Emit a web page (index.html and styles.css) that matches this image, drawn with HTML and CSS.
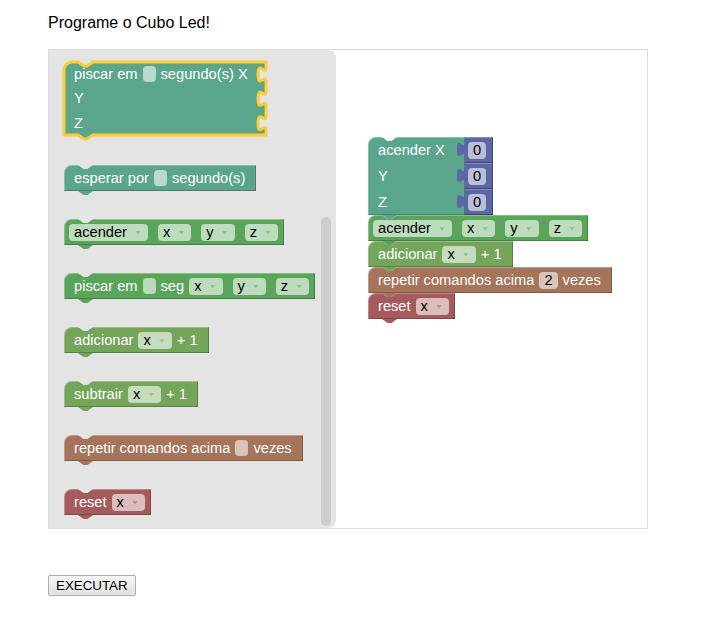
FILE: index.html
```html
<!DOCTYPE html>
<html lang="pt">
<head>
<meta charset="utf-8">
<title>Programe o Cubo Led!</title>
<link rel="stylesheet" href="styles.css">
</head>
<body>
<div class="page">
  <p class="title">Programe o Cubo Led!</p>
  <div class="workspace">
    <div class="flyout">
      <div class="blk sel teal">
        <svg class="sel-shape" width="202" height="73" viewBox="0 0 202 73"><path d="M0,8 A8,8 0 0 1 8,0 H14 l6,4 h3 l6,-4 H202 V5 c0,10 -8,-8 -8,7.5 s8,-2.5 8,7.5 V29.3 c0,10 -8,-8 -8,7.5 s8,-2.5 8,7.5 V53.7 c0,10 -8,-8 -8,7.5 s8,-2.5 8,7.5 V73 H29 l-6,4 h-3 l-6,-4 H0 Z"/></svg>
        <div class="row"><span class="lbl">piscar em</span><span class="num"></span><span class="lbl">segundo(s) X</span></div>
        <div class="row"><span class="lbl">Y</span></div>
        <div class="row"><span class="lbl">Z</span></div>
      </div>
      <div class="blk teal"><span class="lbl">esperar por</span><span class="num"></span><span class="lbl">segundo(s)</span></div>
      <div class="blk green dstart dend"><span class="dd">acender</span><span class="dd sp">x</span><span class="dd sp">y</span><span class="dd sp">z</span></div>
      <div class="blk green dend"><span class="lbl">piscar em</span><span class="num"></span><span class="lbl">seg</span><span class="dd">x</span><span class="dd sp">y</span><span class="dd sp">z</span></div>
      <div class="blk lime"><span class="lbl">adicionar</span><span class="dd">x</span><span class="lbl">+ 1</span></div>
      <div class="blk lime"><span class="lbl">subtrair</span><span class="dd">x</span><span class="lbl">+ 1</span></div>
      <div class="blk brown"><span class="lbl">repetir comandos acima</span><span class="num"></span><span class="lbl">vezes</span></div>
      <div class="blk red dend"><span class="lbl">reset</span><span class="dd">x</span></div>
      <div class="scroll"></div>
    </div>
    <div class="canvas">
      <div class="stack">
        <div class="multi">
          <div class="blk teal mbody">
            <div class="row"><span class="lbl">acender X</span></div>
            <div class="row"><span class="lbl">Y</span></div>
            <div class="row"><span class="lbl">Z</span></div>
          </div>
          <div class="values">
            <div class="val"><svg class="tab" width="8" height="26" viewBox="0 0 8 26"><path d="M8,5 c0,10 -8,-8 -8,7.5 s8,-2.5 8,7.5 Z"/></svg><span class="num val-n">0</span></div>
            <div class="val"><svg class="tab" width="8" height="26" viewBox="0 0 8 26"><path d="M8,5 c0,10 -8,-8 -8,7.5 s8,-2.5 8,7.5 Z"/></svg><span class="num val-n">0</span></div>
            <div class="val"><svg class="tab" width="8" height="26" viewBox="0 0 8 26"><path d="M8,5 c0,10 -8,-8 -8,7.5 s8,-2.5 8,7.5 Z"/></svg><span class="num val-n">0</span></div>
          </div>
        </div>
        <div class="blk green dstart dend"><span class="dd">acender</span><span class="dd sp">x</span><span class="dd sp">y</span><span class="dd sp">z</span></div>
        <div class="blk lime"><span class="lbl">adicionar</span><span class="dd">x</span><span class="lbl">+ 1</span></div>
        <div class="blk brown"><span class="lbl">repetir comandos acima</span><span class="num val-n">2</span><span class="lbl">vezes</span></div>
        <div class="blk red dend"><span class="lbl">reset</span><span class="dd">x</span></div>
      </div>
    </div>
  </div>
  <button class="run" type="button">EXECUTAR</button>
</div>
</body>
</html>
```

FILE: styles.css
```css
html, body {
  margin: 0;
  padding: 0;
  background: #fff;
}

.page {
  padding: 0 0 0 48px;
  font-family: "Liberation Sans", Arial, sans-serif;
}

.title {
  margin: 14px 0 17px;
  font-size: 16px;
  line-height: 18px;
  color: #000;
}

.workspace {
  width: 600px;
  height: 480px;
  box-sizing: border-box;
  border: 1px solid #ddd;
  display: flex;
}

.flyout {
  --bg: #e4e4e4;
  position: relative;
  width: 287px;
  flex: none;
  box-sizing: border-box;
  background: #e4e4e4;
  border-radius: 0 8px 8px 0;
  padding: 12px 0 0 15px;
  display: flex;
  flex-direction: column;
  align-items: flex-start;
  gap: 28px;
}

.scroll {
  position: absolute;
  left: 272px;
  top: 167px;
  width: 10px;
  height: 309px;
  border-radius: 5px;
  background: #cdcdcd;
}

.canvas {
  --bg: #fff;
  position: relative;
  flex: 1;
  background: #fff;
}

.stack {
  position: absolute;
  left: 32px;
  top: 87px;
  display: flex;
  flex-direction: column;
  align-items: flex-start;
}

/* ---------- blocks ---------- */
.blk {
  position: relative;
  display: flex;
  align-items: center;
  height: 26px;
  box-sizing: border-box;
  padding: 0 11px 0 10px;
  background: var(--c);
  border-top-left-radius: 8px;
  font-size: 14.667px;
  color: #fff;
  white-space: nowrap;
  box-shadow:
    inset 0 1px 0 rgba(255, 255, 255, .28),
    inset 1px 0 0 rgba(255, 255, 255, .28),
    inset 0 -1px 0 rgba(0, 0, 0, .22),
    inset -1px 0 0 rgba(0, 0, 0, .22);
}

.blk::before {
  content: "";
  position: absolute;
  left: 14px;
  top: 0;
  width: 15px;
  height: 4px;
  background: var(--bg);
  clip-path: polygon(0 0, 15px 0, 9.5px 4px, 5.5px 4px);
}

.blk::after {
  content: "";
  position: absolute;
  left: 14px;
  top: 100%;
  width: 15px;
  height: 4px;
  background: var(--c);
  z-index: 2;
  clip-path: polygon(0 0, 15px 0, 9.5px 4px, 5.5px 4px);
}

.blk > * + * {
  margin-left: 5px;
}

.blk > .dd.sp {
  margin-left: 10px;
}

.blk.dstart {
  padding-left: 5px;
}

.blk.dend {
  padding-right: 6px;
}

.teal { --c: #5ba58c; --a: #8ac2ae; }
.green { --c: #5ba55b; --a: #8bc28b; }
.lime { --c: #74a55b; --a: #9ec28b; }
.brown { --c: #a5745b; --a: #c5a08c; }
.red { --c: #a55b5b; --a: #c58b8b; }

.lbl {
  display: block;
}

.num {
  display: block;
  width: 13px;
  height: 16px;
  border-radius: 4px;
  background: rgba(255, 255, 255, .58);
}

.num.val-n {
  width: auto;
  height: 17px;
  line-height: 17px;
  padding: 0 5px;
  color: #000;
}

.dd {
  display: flex;
  align-items: center;
  height: 17px;
  border-radius: 4px;
  padding: 0 7px 0 5px;
  background: rgba(255, 255, 255, .6);
  color: #000;
}

.dd::after {
  content: "";
  display: block;
  width: 6px;
  height: 4px;
  margin-left: 8px;
  margin-top: 1px;
  background: var(--a);
  clip-path: polygon(0 0, 100% 0, 50% 100%);
}

/* selected multi-row block in flyout */
.blk.sel {
  display: block;
  width: 202px;
  height: 73px;
  padding: 0 0 0 10px;
  background: none;
  box-shadow: none;
  border-radius: 0;
  margin-bottom: 2px;
}

.blk.sel::before,
.blk.sel::after {
  display: none;
}

.sel-shape {
  position: absolute;
  left: 0;
  top: 0;
  overflow: visible;
}

.sel-shape path {
  fill: #5ba58c;
  stroke: #fc3;
  stroke-width: 3px;
  stroke-linejoin: round;
}

.row {
  position: relative;
  display: flex;
  align-items: center;
  height: 24.33px;
}

.blk > .row {
  margin-left: 0;
}

.row > * + * {
  margin-left: 5px;
}

/* multi-row block with plugged value blocks */
.multi {
  display: flex;
}

.blk.mbody {
  display: block;
  width: 97px;
  height: 78px;
  padding: 0 0 0 10px;
}

.mbody .row {
  height: 26px;
}

.values {
  display: flex;
  flex-direction: column;
}

.val {
  position: relative;
  display: flex;
  align-items: center;
  height: 26px;
  box-sizing: border-box;
  padding: 0 7px 0 3px;
  background: #5b67a5;
  font-size: 14.667px;
  box-shadow:
    inset 0 1px 0 rgba(255, 255, 255, .25),
    inset 0 -1px 0 rgba(0, 0, 0, .3),
    inset -1px 0 0 rgba(0, 0, 0, .3);
}

.tab {
  position: absolute;
  left: -8px;
  top: 0;
  overflow: visible;
}

.tab path {
  fill: #5b67a5;
}

/* ---------- button ---------- */
.run {
  display: block;
  margin-top: 46px;
  height: 21px;
  padding: 0 7px;
  border: 1px solid #adadad;
  border-radius: 2px;
  background: linear-gradient(#f6f6f6, #e2e2e2);
  font-family: "Liberation Sans", Arial, sans-serif;
  font-size: 13.333px;
  color: #000;
}
```
